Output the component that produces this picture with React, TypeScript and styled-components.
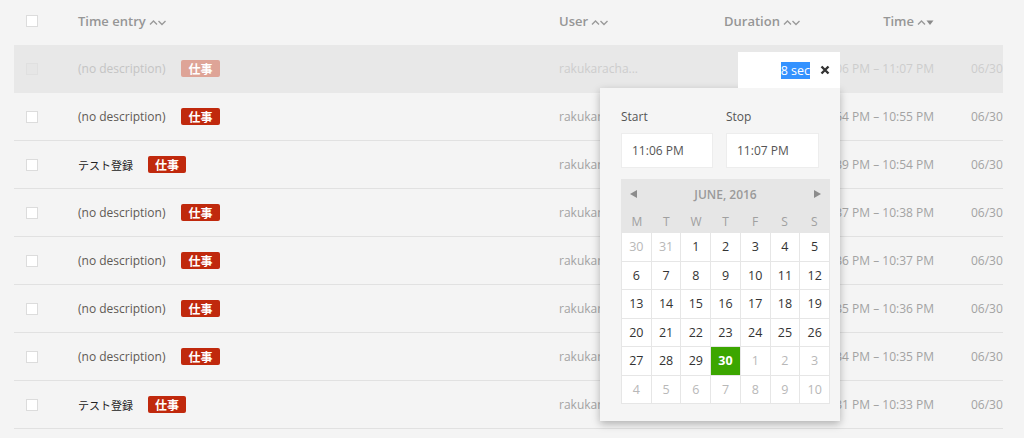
import React from 'react';
import styled, { createGlobalStyle } from 'styled-components';

const GlobalStyle = createGlobalStyle`
  body {
    margin: 0;
    background: #f4f4f4;
    font-family: 'Open Sans', 'Noto Sans CJK JP', sans-serif;
  }
`;

type Entry = {
  description: string;
  time: string;
  duration: string;
};

const entries: Entry[] = [
  { description: '(no description)', time: '11:06 PM – 11:07 PM', duration: '' },
  { description: '(no description)', time: '10:54 PM – 10:55 PM', duration: '1 min' },
  { description: 'テスト登録', time: '10:39 PM – 10:54 PM', duration: '15 min' },
  { description: '(no description)', time: '10:37 PM – 10:38 PM', duration: '1 min' },
  { description: '(no description)', time: '10:36 PM – 10:37 PM', duration: '1 min' },
  { description: '(no description)', time: '10:35 PM – 10:36 PM', duration: '1 min' },
  { description: '(no description)', time: '10:34 PM – 10:35 PM', duration: '1 min' },
  { description: 'テスト登録', time: '10:31 PM – 10:33 PM', duration: '2 min' },
];

const weekdays = ['M', 'T', 'W', 'T', 'F', 'S', 'S'];

const days = [
  30, 31, 1, 2, 3, 4, 5,
  6, 7, 8, 9, 10, 11, 12,
  13, 14, 15, 16, 17, 18, 19,
  20, 21, 22, 23, 24, 25, 26,
  27, 28, 29, 30, 1, 2, 3,
  4, 5, 6, 7, 8, 9, 10,
];

const SortIcon: React.FC<{ active?: boolean }> = ({ active }) => (
  <SortSvg width="17" height="9" viewBox="0 0 17 9">
    <path d="M1 6.5 L4.5 3 L8 6.5" fill="none" stroke="#9a9a9a" strokeWidth="1.4" />
    {active ? (
      <path d="M9.5 2.5 L16.5 2.5 L13 7 Z" fill="#8a8a8a" />
    ) : (
      <path d="M9.5 3 L13 6.5 L16.5 3" fill="none" stroke="#9a9a9a" strokeWidth="1.4" />
    )}
  </SortSvg>
);

const App: React.FC = () => {
  return (
    <>
      <GlobalStyle />
      <Table>
        <HeaderRow>
          <Cell><Checkbox /></Cell>
          <HeadCell>Time entry<SortIcon /></HeadCell>
          <HeadCell>User<SortIcon /></HeadCell>
          <HeadCell>Duration<SortIcon /></HeadCell>
          <HeadCell $right>Time<SortIcon active /></HeadCell>
          <Cell />
        </HeaderRow>

        {entries.map((e, i) => {
          const faded = i === 0;
          const plain = e.description.startsWith('(');
          return (
            <Row key={i} $faded={faded}>
              <Cell><Checkbox $faded={faded} /></Cell>
              <Cell>
                <Description $faded={faded} $plain={plain}>
                  {e.description}
                </Description>
                <Tag $faded={faded}>仕事</Tag>
              </Cell>
              <Muted $faded={faded}>rakukaracha...</Muted>
              <Muted $faded={faded}>{e.duration}</Muted>
              <Muted $faded={faded} $right>{e.time}</Muted>
              <DateCell $faded={faded}>06/30</DateCell>
            </Row>
          );
        })}

        <DurationEditor>
          <Selected>8 sec</Selected>
          <svg width="10" height="10" viewBox="0 0 10 10">
            <path d="M1.5 1.5 L8.5 8.5 M8.5 1.5 L1.5 8.5" stroke="#333" strokeWidth="2.4" />
          </svg>
        </DurationEditor>

        <Popup>
          <TimeFields>
            <Field>
              <Label>Start</Label>
              <TimeInput $w={92}>11:06 PM</TimeInput>
            </Field>
            <Field>
              <Label>Stop</Label>
              <TimeInput $w={93}>11:07 PM</TimeInput>
            </Field>
          </TimeFields>

          <Calendar>
            <MonthBar>
              <svg width="7" height="8" viewBox="0 0 7 8"><path d="M7 0 L7 8 L0 4 Z" fill="#8c8c8c" /></svg>
              <span>June, 2016</span>
              <svg width="7" height="8" viewBox="0 0 7 8"><path d="M0 0 L0 8 L7 4 Z" fill="#8c8c8c" /></svg>
            </MonthBar>
            <WeekRow>
              {weekdays.map((d, i) => <span key={i}>{d}</span>)}
            </WeekRow>
            <DayGrid>
              {days.map((d, i) => {
                const other = i < 2 || i > 31;
                return (
                  <Day key={i} $other={other} $today={i === 31}>{d}</Day>
                );
              })}
            </DayGrid>
          </Calendar>
        </Popup>
      </Table>
    </>
  );
};

const Table = styled.div`
  position: relative;
  margin-left: 14px;
  width: 989px;
  height: 438px;
  overflow: hidden;
`;

const columns = '64px 481px 165px 95px 115px 1fr';

const HeaderRow = styled.div`
  display: grid;
  grid-template-columns: ${columns};
  align-items: center;
  height: 45px;
  padding-bottom: 3px;
  box-sizing: border-box;
`;

const Row = styled.div<{ $faded?: boolean }>`
  display: grid;
  grid-template-columns: ${columns};
  align-items: center;
  height: 48px;
  box-sizing: border-box;
  border-bottom: 1px solid ${p => (p.$faded ? '#e8e8e8' : '#e1e1e1')};
  background: ${p => (p.$faded ? '#e8e8e8' : 'transparent')};
`;

const Cell = styled.div`
  display: flex;
  align-items: center;
  white-space: nowrap;
`;

const HeadCell = styled(Cell)<{ $right?: boolean }>`
  justify-content: ${p => (p.$right ? 'flex-end' : 'flex-start')};
  font-size: 13px;
  font-weight: 600;
  color: #969696;
`;

const SortSvg = styled.svg`
  margin-left: 3px;
  margin-top: 2px;
`;

const Checkbox = styled.span<{ $faded?: boolean }>`
  display: block;
  margin-left: 12px;
  width: 12px;
  height: 12px;
  box-sizing: border-box;
  background: ${p => (p.$faded ? '#e6e6e6' : '#fff')};
  border: 1px solid ${p => (p.$faded ? '#e0e0e0' : '#dcdcdc')};
`;

const Description = styled.span<{ $faded?: boolean; $plain?: boolean }>`
  font-size: ${p => (p.$plain ? '12px' : '11px')};
  color: ${p => (p.$faded ? '#c4c4c4' : p.$plain ? '#5f5a55' : '#222')};
  margin-right: ${p => (p.$plain ? '16px' : '15px')};
`;

const Tag = styled.span<{ $faded?: boolean }>`
  display: inline-flex;
  align-items: center;
  height: 17px;
  padding: 0 7px;
  border-radius: 2px;
  background: ${p => (p.$faded ? '#dea497' : '#c0290d')};
  color: #fff;
  font-size: 12px;
  font-weight: 700;
  font-family: 'Noto Sans CJK JP', sans-serif;
`;

const Muted = styled(Cell)<{ $faded?: boolean; $right?: boolean }>`
  justify-content: ${p => (p.$right ? 'flex-end' : 'flex-start')};
  font-size: 12px;
  color: ${p => (p.$faded ? '#cdcdcd' : '#a3a3a3')};
`;

const DateCell = styled(Muted)`
  padding-left: 37px;
`;

const DurationEditor = styled.div`
  position: absolute;
  left: 724px;
  top: 52px;
  width: 102px;
  height: 36px;
  background: #fff;
  display: flex;
  align-items: center;
  justify-content: flex-end;
  gap: 10px;
  padding-right: 10px;
  box-sizing: border-box;
  z-index: 2;
`;

const Selected = styled.span`
  background: #3392ff;
  color: #fff;
  font-size: 12.5px;
  line-height: 17px;
`;

const Popup = styled.div`
  position: absolute;
  left: 586px;
  top: 88px;
  width: 240px;
  height: 333px;
  box-sizing: border-box;
  padding: 21px 10px 0 21px;
  background: #f5f5f5;
  box-shadow: 0 3px 8px rgba(0, 0, 0, 0.28);
  z-index: 1;
`;

const TimeFields = styled.div`
  display: flex;
  gap: 13px;
`;

const Field = styled.div`
  display: flex;
  flex-direction: column;
`;

const Label = styled.span`
  font-size: 12px;
  line-height: 16px;
  color: #555;
  margin-bottom: 8px;
`;

const TimeInput = styled.div<{ $w: number }>`
  width: ${p => p.$w}px;
  height: 35px;
  box-sizing: border-box;
  background: #fff;
  border: 1px solid #ededed;
  display: flex;
  align-items: center;
  padding-left: 10px;
  font-size: 12px;
  color: #555;
`;

const Calendar = styled.div`
  margin-top: 11px;
  width: 209px;
  padding: 0 1px 1px;
  box-sizing: border-box;
  background: #e6e6e6;
`;

const MonthBar = styled.div`
  display: flex;
  align-items: center;
  justify-content: space-between;
  height: 30px;
  padding: 0 8px 0 8px;
  font-size: 12px;
  font-weight: 600;
  text-transform: uppercase;
  color: #9a9a9a;
`;

const WeekRow = styled.div`
  display: grid;
  grid-template-columns: repeat(7, 1fr);
  height: 24px;
  align-items: center;
  text-align: center;
  font-size: 12px;
  color: #a0a0a0;
`;

const DayGrid = styled.div`
  display: grid;
  grid-template-columns: repeat(7, 1fr);
  grid-auto-rows: 27.5px;
  gap: 1px;
`;

const Day = styled.div<{ $other?: boolean; $today?: boolean }>`
  display: flex;
  align-items: center;
  justify-content: center;
  font-size: 12.5px;
  background: ${p => (p.$today ? '#3ca600' : '#fff')};
  color: ${p => (p.$today ? '#fff' : p.$other ? '#b8b8b8' : '#333')};
  font-weight: ${p => (p.$today ? 700 : 400)};
`;

export default App;
